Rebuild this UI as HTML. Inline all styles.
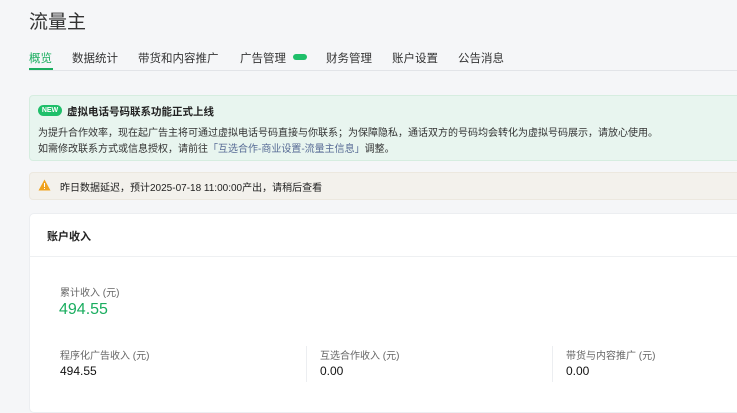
<!DOCTYPE html>
<html><head><meta charset="utf-8"><style>
*{margin:0;padding:0;box-sizing:border-box}
body{width:737px;height:404px;overflow:hidden;background:#f5f6f8;font-family:"Liberation Sans","Noto Sans CJK SC",sans-serif;color:#222;position:relative}
.a{position:absolute;white-space:nowrap}
</style></head><body>
<div class="a" style="left:29px;top:7px;font-size:19px;color:#333">流量主</div>
<div class="a" style="left:29px;top:70px;width:720px;height:1px;background:#e2e4e8"></div>
<div class="a" style="left:29px;top:50px;font-size:11.5px;color:#1aad5f">概览</div>
<div class="a" style="left:29px;top:68px;width:24px;height:2px;background:#1aad5f"></div>
<div class="a" style="left:72px;top:50px;font-size:11.5px;color:#333">数据统计</div>
<div class="a" style="left:138px;top:50px;font-size:11.5px;color:#333">带货和内容推广</div>
<div class="a" style="left:240px;top:50px;font-size:11.5px;color:#333">广告管理</div>
<div class="a" style="left:293px;top:54px;width:14px;height:6px;border-radius:3px;background:#1fbf6a"></div>
<div class="a" style="left:326px;top:50px;font-size:11.5px;color:#333">财务管理</div>
<div class="a" style="left:392px;top:50px;font-size:11.5px;color:#333">账户设置</div>
<div class="a" style="left:458px;top:50px;font-size:11.5px;color:#333">公告消息</div>

<div class="a" style="left:29px;top:95px;width:720px;height:66px;background:#e8f5ef;border:1px solid #d6ede0;border-radius:4px"></div>
<div class="a" style="left:38px;top:105px;width:24px;height:11px;border-radius:6px;background:#1fbf6a;color:#fff;font-size:7px;font-weight:bold;line-height:11px;text-align:center">NEW</div>
<div class="a" style="left:67px;top:104px;font-size:10.5px;font-weight:bold;color:#222">虚拟电话号码联系功能正式上线</div>
<div class="a" style="left:38px;top:124px;font-size:10px;color:#333">为提升合作效率，现在起广告主将可通过虚拟电话号码直接与你联系；为保障隐私，通话双方的号码均会转化为虚拟号码展示，请放心使用。</div>
<div class="a" style="left:38px;top:140px;font-size:10px;color:#333">如需修改联系方式或信息授权，请前往<span style="color:#576b95">「互选合作-商业设置-流量主信息」</span>调整。</div>

<div class="a" style="left:29px;top:172px;width:720px;height:28px;background:#f3f1ec;border:1px solid #ece8df;border-radius:4px"></div>
<svg class="a" style="left:38px;top:179px" width="13" height="12" viewBox="0 0 13 12"><path d="M6.5 0.5L12.5 11.5H0.5Z" fill="#f0a21e"/><rect x="6" y="4" width="1" height="4" fill="#fff"/><rect x="6" y="9" width="1" height="1" fill="#fff"/></svg>
<div class="a" style="left:60px;top:179px;font-size:10px;color:#222">昨日数据延迟，预计2025-07-18 11:00:00产出，请稍后查看</div>

<div class="a" style="left:29px;top:213px;width:720px;height:200px;background:#fff;border:1px solid #eceef1;border-radius:5px"></div>
<div class="a" style="left:29px;top:256px;width:720px;height:1px;background:#eef0f2"></div>
<div class="a" style="left:47px;top:228px;font-size:11px;font-weight:bold;color:#222">账户收入</div>
<div class="a" style="left:60px;top:284px;font-size:10px;color:#666">累计收入 (元)</div>
<div class="a" style="left:59px;top:301px;font-size:16px;color:#1aad5f">494.55</div>
<div class="a" style="left:60px;top:347px;font-size:10px;color:#666">程序化广告收入 (元)</div>
<div class="a" style="left:60px;top:364px;font-size:12px;color:#111">494.55</div>
<div class="a" style="left:306px;top:346px;width:1px;height:36px;background:#eceef1"></div>
<div class="a" style="left:320px;top:347px;font-size:10px;color:#666">互选合作收入 (元)</div>
<div class="a" style="left:320px;top:364px;font-size:12px;color:#111">0.00</div>
<div class="a" style="left:552px;top:346px;width:1px;height:36px;background:#eceef1"></div>
<div class="a" style="left:566px;top:347px;font-size:10px;color:#666">带货与内容推广 (元)</div>
<div class="a" style="left:566px;top:364px;font-size:12px;color:#111">0.00</div>
</body></html>
